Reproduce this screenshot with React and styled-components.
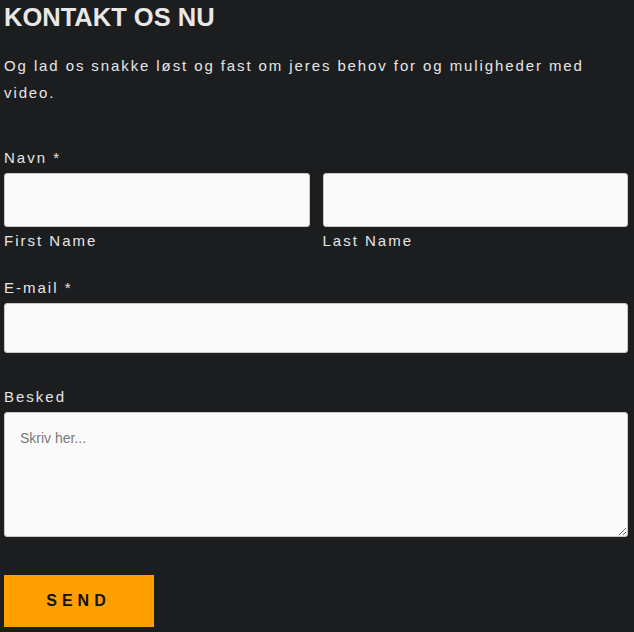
import React from "react";
import styled, { createGlobalStyle } from "styled-components";

const GlobalStyle = createGlobalStyle`
  html, body {
    margin: 0;
    background: #1c1d1f;
  }
  * {
    box-sizing: border-box;
  }
`;

const Wrapper = styled.div`
  width: 624px;
  margin-left: 4px;
  font-family: "Liberation Sans", Arial, sans-serif;
  color: #e6e6e6;
`;

const Title = styled.h2`
  margin: 0;
  padding-top: 4px;
  font-size: 25.5px;
  line-height: 26px;
  font-weight: 700;
  color: #e8e8e8;
`;

const Intro = styled.p`
  margin: 22px 0 0;
  font-size: 15px;
  line-height: 27px;
  letter-spacing: 1.9px;
  color: #e6e6e6;
`;

const Form = styled.form`
  display: flex;
  flex-direction: column;
  margin-top: 42px;
`;

const Field = styled.div`
  display: flex;
  flex-direction: column;
  margin-bottom: ${({ $gap }) => $gap || 0}px;
`;

const Label = styled.label`
  font-size: 15px;
  line-height: 20px;
  letter-spacing: 2px;
  color: #e6e6e6;
  margin-bottom: 5px;
`;

const Row = styled.div`
  display: grid;
  grid-template-columns: 1fr 1fr;
  gap: 13px;
`;

const Sub = styled.div`
  display: flex;
  flex-direction: column;
`;

const SubLabel = styled.span`
  font-size: 15px;
  line-height: 20px;
  letter-spacing: 2px;
  color: #e6e6e6;
  margin-top: 4px;
`;

const Input = styled.input`
  width: 100%;
  height: ${({ $h }) => $h || 50}px;
  border: 1px solid #c8c8c8;
  border-radius: 3px;
  background: #fafafa;
  font-family: inherit;
  font-size: 14px;
  padding: 0 14px;
  outline: none;
`;

const TextArea = styled.textarea`
  width: 100%;
  height: 125px;
  border: 1px solid #c8c8c8;
  border-radius: 3px;
  background: #fafafa;
  font-family: "Liberation Sans", Arial, sans-serif;
  font-size: 14px;
  line-height: 20px;
  padding: 15px 15px;
  outline: none;
  display: block;

  &::placeholder {
    color: #7a7a7a;
  }
`;

const Button = styled.button`
  align-self: flex-start;
  width: 150px;
  height: 52px;
  margin-top: 38px;
  border: none;
  background: #ff9f00;
  color: #111;
  font-family: "Liberation Sans", Arial, sans-serif;
  font-size: 16px;
  font-weight: 700;
  letter-spacing: 5px;
  padding-left: 5px;
  cursor: pointer;
`;

const App = () => (
  <>
    <GlobalStyle />
    <Wrapper>
      <Title>KONTAKT OS NU</Title>
      <Intro>
        Og lad os snakke løst og fast om jeres behov for og muligheder med
        video.
      </Intro>
      <Form onSubmit={(e) => e.preventDefault()}>
        <Field $gap={27}>
          <Label>Navn *</Label>
          <Row>
            <Sub>
              <Input $h={54} />
              <SubLabel>First Name</SubLabel>
            </Sub>
            <Sub>
              <Input $h={54} />
              <SubLabel>Last Name</SubLabel>
            </Sub>
          </Row>
        </Field>
        <Field $gap={34}>
          <Label>E-mail *</Label>
          <Input type="email" $h={50} />
        </Field>
        <Field>
          <Label>Besked</Label>
          <TextArea placeholder="Skriv her..." />
        </Field>
        <Button type="submit">SEND</Button>
      </Form>
    </Wrapper>
  </>
);

export default App;
